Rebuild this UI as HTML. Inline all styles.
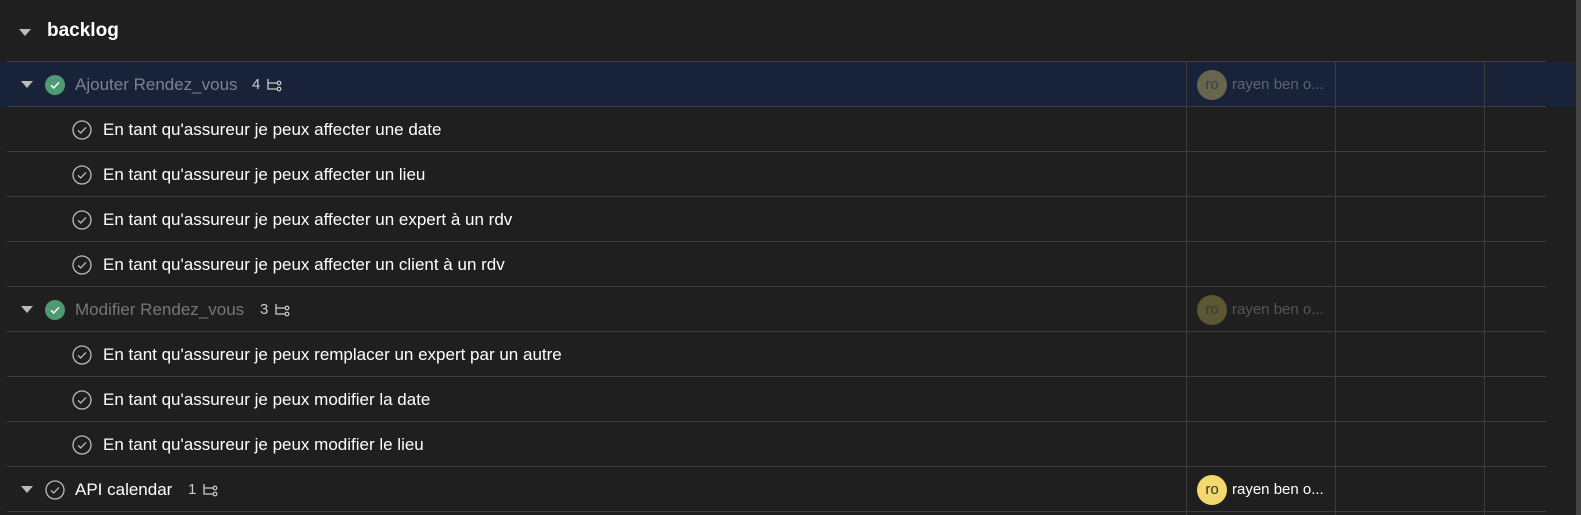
<!DOCTYPE html>
<html><head><style>
body{margin:0;width:1581px;height:515px;background:#1f1f20;font-family:"Segoe UI","Liberation Sans",sans-serif;color:#fff;overflow:hidden;position:relative}
.a{position:absolute}
.h{left:0;top:62px;width:1576px;height:45px;background:#182238}
.hl{height:1px;background:#3d3d3d;left:7px;width:1539px}
.vl{width:1px;background:#3d3d3d;top:62px;height:453px}
.t{font-size:17px;white-space:nowrap;line-height:20px}
.tri{width:0;height:0;border-left:6px solid transparent;border-right:6px solid transparent;border-top:7px solid #bbb}
.av{width:30px;height:30px;border-radius:50%;text-align:center;line-height:30px;font-size:15px;color:#333}
</style></head><body>
<div class="a h"></div>
<div class="a" style="left:1576px;top:0;width:5px;height:515px;background:#444"></div>
<div class="a tri" style="left:19px;top:29px"></div>
<div class="a t" style="left:47px;top:19px;font-size:19px;font-weight:bold;line-height:24px">backlog</div>

<div class="a hl" style="top:61px"></div>
<div class="a hl" style="top:106px"></div>
<div class="a hl" style="top:151px"></div>
<div class="a hl" style="top:196px"></div>
<div class="a hl" style="top:241px"></div>
<div class="a hl" style="top:286px"></div>
<div class="a hl" style="top:331px"></div>
<div class="a hl" style="top:376px"></div>
<div class="a hl" style="top:421px"></div>
<div class="a hl" style="top:466px"></div>
<div class="a hl" style="top:511px"></div>
<div class="a vl" style="left:1186px"></div>
<div class="a vl" style="left:1335px"></div>
<div class="a vl" style="left:1484px"></div>

<svg class="a" style="left:0;top:0" width="1581" height="515">
<defs>
<symbol id="ck" viewBox="0 0 20 20"><circle cx="10" cy="10" r="9" fill="none" stroke="#bbb" stroke-width="1.3"/><path d="M6 10.3l2.7 2.6 5.3-5.5" fill="none" stroke="#bbb" stroke-width="1.3"/></symbol>
<symbol id="ckf" viewBox="0 0 20 20"><circle cx="10" cy="10" r="10" fill="#4f9a73"/><path d="M6 10.3l2.7 2.6 5.3-5.5" fill="none" stroke="#fff" stroke-width="1.5"/></symbol>
<symbol id="br" viewBox="0 0 16 14"><path d="M2 1v10h9M2 5h9" fill="none" stroke="#ccc" stroke-width="1.3"/><circle cx="13" cy="5" r="1.8" fill="none" stroke="#ccc" stroke-width="1.2"/><circle cx="13" cy="11" r="1.8" fill="none" stroke="#ccc" stroke-width="1.2"/></symbol>
</defs>
<use href="#ckf" x="45" y="75" width="20" height="20"/>
<use href="#ckf" x="45" y="300" width="20" height="20"/>
<use href="#ck" x="45" y="480" width="20" height="20"/>
<use href="#ck" x="72" y="120" width="20" height="20"/>
<use href="#ck" x="72" y="165" width="20" height="20"/>
<use href="#ck" x="72" y="210" width="20" height="20"/>
<use href="#ck" x="72" y="255" width="20" height="20"/>
<use href="#ck" x="72" y="345" width="20" height="20"/>
<use href="#ck" x="72" y="390" width="20" height="20"/>
<use href="#ck" x="72" y="435" width="20" height="20"/>
<use href="#br" x="266" y="78" width="16" height="14"/>
<use href="#br" x="274" y="303" width="16" height="14"/>
<use href="#br" x="202" y="483" width="16" height="14"/>
</svg>

<div class="a tri" style="left:21px;top:81px"></div>
<div class="a t" style="left:75px;top:75px;color:#7d8290">Ajouter Rendez_vous</div>
<div class="a t" style="left:252px;top:75px;color:#ccc;font-size:15px">4</div>
<div class="a tri" style="left:21px;top:306px"></div>
<div class="a t" style="left:75px;top:300px;color:#777">Modifier Rendez_vous</div>
<div class="a t" style="left:260px;top:300px;color:#ccc;font-size:15px">3</div>
<div class="a tri" style="left:21px;top:486px"></div>
<div class="a t" style="left:75px;top:480px">API calendar</div>
<div class="a t" style="left:188px;top:480px;color:#ccc;font-size:15px">1</div>

<div class="a t" style="left:103px;top:120px">En tant qu'assureur je peux affecter une date</div>
<div class="a t" style="left:103px;top:165px">En tant qu'assureur je peux affecter un lieu</div>
<div class="a t" style="left:103px;top:210px">En tant qu'assureur je peux affecter un expert à un rdv</div>
<div class="a t" style="left:103px;top:255px">En tant qu'assureur je peux affecter un client à un rdv</div>
<div class="a t" style="left:103px;top:345px">En tant qu'assureur je peux remplacer un expert par un autre</div>
<div class="a t" style="left:103px;top:390px">En tant qu'assureur je peux modifier la date</div>
<div class="a t" style="left:103px;top:435px">En tant qu'assureur je peux modifier le lieu</div>

<div class="a av" style="left:1197px;top:70px;background:#66664f;color:#3a3d45">ro</div>
<div class="a t" style="left:1232px;top:75px;color:#5c6474;font-size:15px">rayen ben o...</div>
<div class="a av" style="left:1197px;top:295px;background:#5c5633;color:#3a3a36">ro</div>
<div class="a t" style="left:1232px;top:300px;color:#555;font-size:15px">rayen ben o...</div>
<div class="a av" style="left:1197px;top:475px;background:#f3d86d">ro</div>
<div class="a t" style="left:1232px;top:480px;color:#fff;font-size:15px">rayen ben o...</div>
</body></html>
